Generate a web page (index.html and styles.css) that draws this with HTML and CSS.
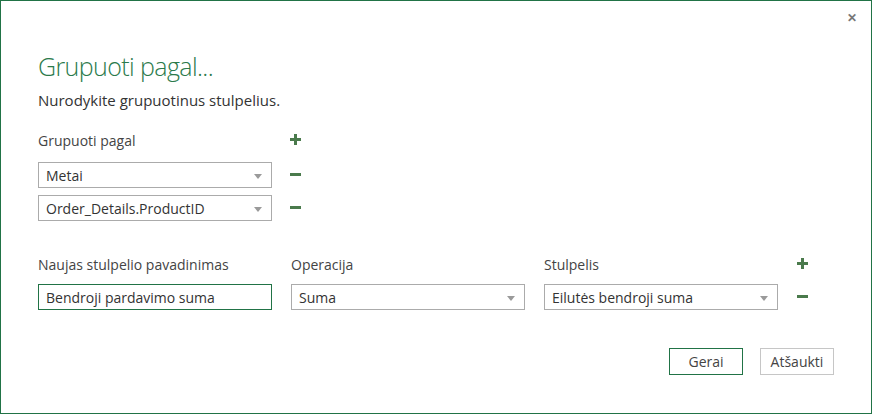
FILE: index.html
```
<!DOCTYPE html>
<html>
<head>
  <title>Grupuoti pagal</title>
  <link rel="stylesheet" href="styles.css">
</head>
<body>

  <div class="dialog">
    <div class="topbar">
      <span class="close-button">&#x2715;</span>
    </div>

    <div class="content">
      <h1 class="title">Grupuoti pagal...</h1>
      <p class="subtitle">Nurodykite grupuotinus stulpelius.</p>

      <div class="group-grid">
        <div class="label">Grupuoti pagal</div>
        <span class="icon plus"></span>

        <div class="dropdown">Metai<span class="arrow"></span></div>
        <span class="icon minus"></span>

        <div class="dropdown">Order_Details.ProductID<span class="arrow"></span></div>
        <span class="icon minus"></span>
      </div>

      <div class="agg-grid">
        <div class="label">Naujas stulpelio pavadinimas</div>
        <div class="label">Operacija</div>
        <div class="label">Stulpelis</div>
        <span class="icon plus"></span>

        <div class="text-input">Bendroji pardavimo suma</div>
        <div class="dropdown">Suma<span class="arrow"></span></div>
        <div class="dropdown">Eilutės bendroji suma<span class="arrow"></span></div>
        <span class="icon minus"></span>
      </div>

      <div class="buttons">
        <button class="btn btn-ok">Gerai</button>
        <button class="btn">Atšaukti</button>
      </div>
    </div>
  </div>

</body>
</html>
```

FILE: styles.css
```
body {
  margin: 0;
  padding: 0;
  background-color: #fff;
  font-family: "Open Sans", "Noto Sans", sans-serif;
  color: #444;
}

.dialog {
  width: 872px;
  height: 414px;
  box-sizing: border-box;
  border: 1px solid #217346;
  background-color: #fff;
}

.topbar {
  display: flex;
  justify-content: flex-end;
  padding: 9px 14px 0 0;
  height: 16px;
}

.close-button {
  font-size: 12px;
  font-weight: bold;
  color: #777;
  line-height: 16px;
}

.content {
  padding: 0 37px 0 37px;
}

.title {
  margin: 24px 0 0 0;
  font-size: 25px;
  font-weight: 300;
  letter-spacing: -0.6px;
  color: #2b7a4b;
  line-height: 32px;
}

.subtitle {
  margin: 8px 0 0 0;
  font-size: 15px;
  line-height: 20px;
  color: #333;
}

.label {
  font-size: 14px;
  line-height: 20px;
  color: #444;
}

.group-grid {
  display: grid;
  grid-template-columns: 234px 12px;
  column-gap: 18px;
  row-gap: 7px;
  align-items: center;
  margin-top: 21px;
}

.group-grid .label {
  margin-bottom: 4px;
}

.agg-grid {
  display: grid;
  grid-template-columns: 234px 234px 234px 12px;
  column-gap: 19px;
  row-gap: 9px;
  align-items: center;
  margin-top: 34px;
}

.dropdown,
.text-input {
  position: relative;
  height: 26px;
  box-sizing: border-box;
  border: 1px solid #ababab;
  padding: 0 7px;
  font-size: 14px;
  line-height: 26px;
  color: #333;
  background-color: #fff;
}

.text-input {
  border-color: #217346;
}

.arrow {
  position: absolute;
  right: 9px;
  top: 11px;
  width: 0;
  height: 0;
  border-left: 4px solid transparent;
  border-right: 4px solid transparent;
  border-top: 5px solid #9a9a9a;
}

.icon {
  position: relative;
  width: 11px;
  height: 11px;
  align-self: start;
}

.plus {
  margin-top: 3px;
}

.minus {
  margin-top: 7px;
}

.minus::before,
.plus::before,
.plus::after {
  content: '';
  position: absolute;
  background-color: #4a7a4c;
}

.minus::before,
.plus::before {
  left: 0;
  top: 4px;
  width: 11px;
  height: 3px;
}

.plus::after {
  left: 4px;
  top: 0;
  width: 3px;
  height: 11px;
}

.buttons {
  display: flex;
  justify-content: flex-end;
  gap: 17px;
  margin-top: 38px;
}

.btn {
  width: 74px;
  height: 27px;
  box-sizing: border-box;
  border: 1px solid #c6c6c6;
  background-color: #fff;
  font-family: "Open Sans", "Noto Sans", sans-serif;
  font-size: 14px;
  color: #444;
  padding: 0;
}

.btn-ok {
  border-color: #217346;
}
```
